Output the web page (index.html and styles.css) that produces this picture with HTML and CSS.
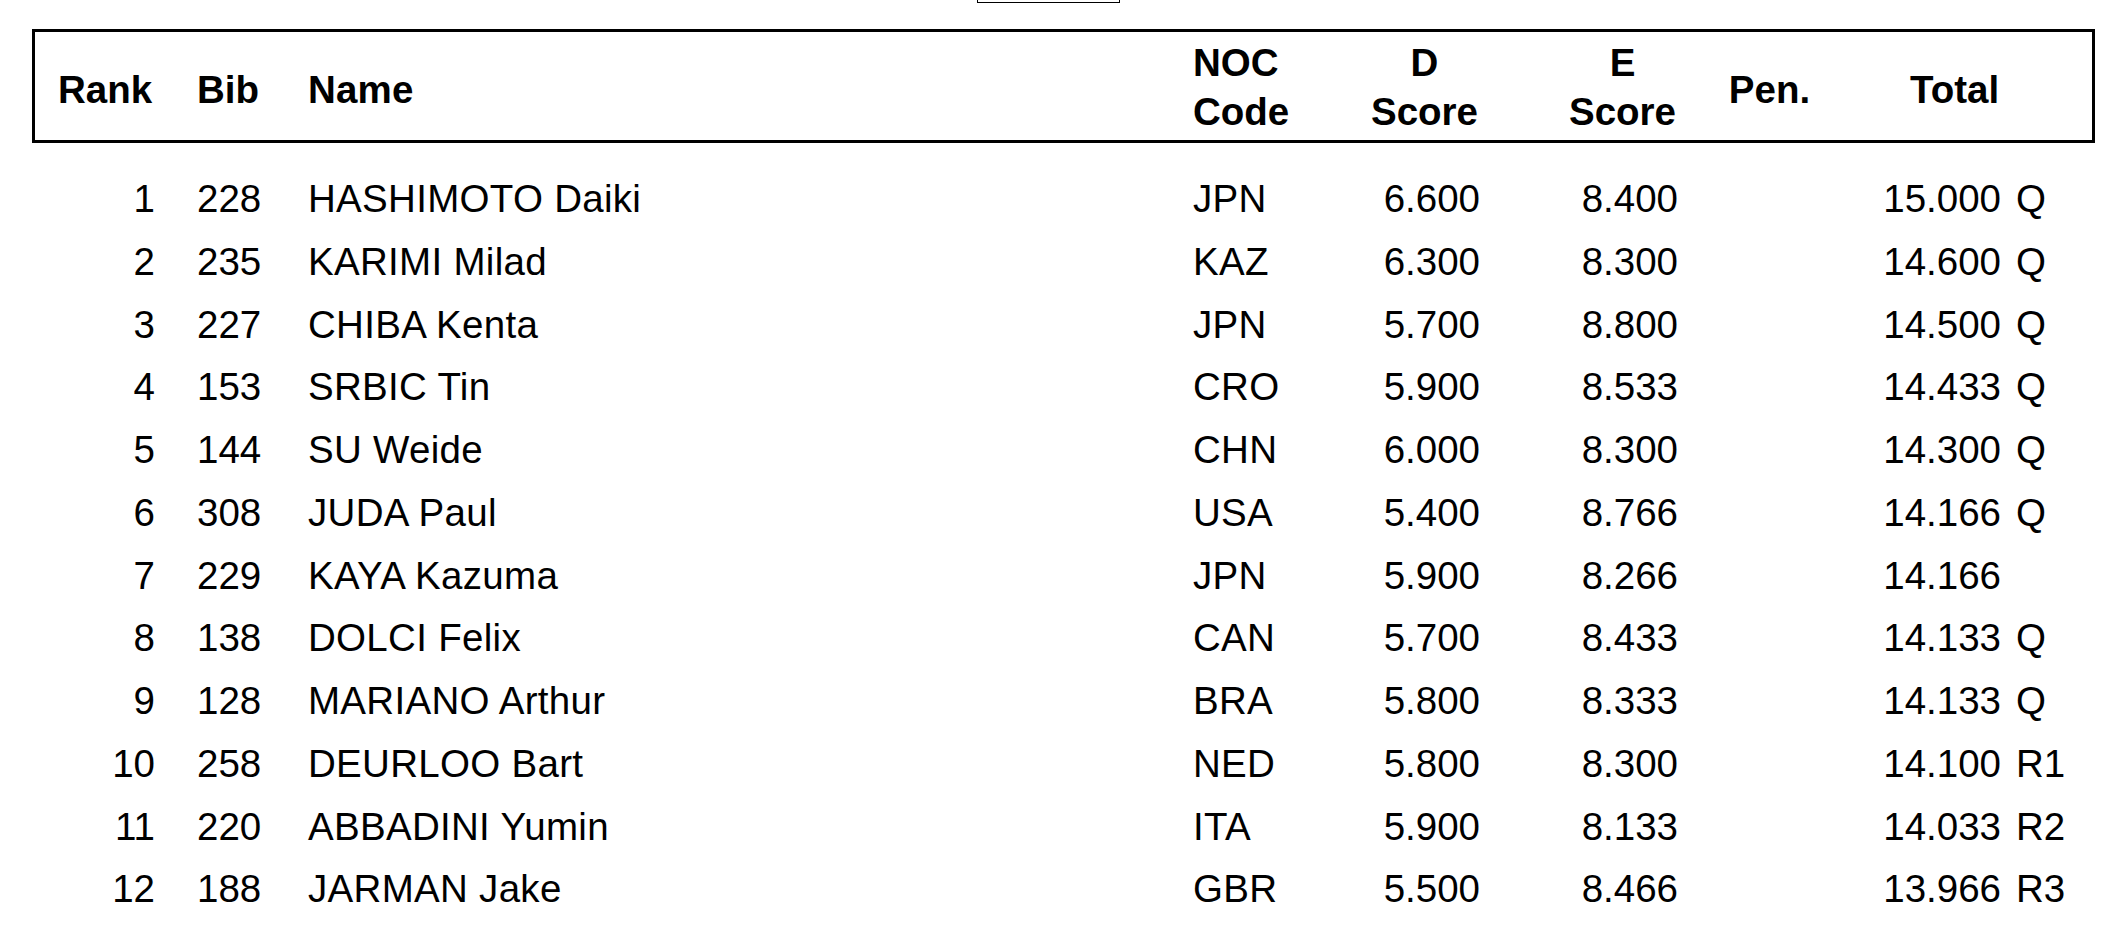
FILE: index.html
```html
<!DOCTYPE html>
<html>
<head>
<meta charset="utf-8">
<title>Results</title>
<link rel="stylesheet" href="styles.css">
</head>
<body>
<div class="topbox"></div>
<div class="head">
  <div class="h-rank single">Rank</div>
  <div class="h-bib single">Bib</div>
  <div class="h-name single">Name</div>
  <div class="h-noc">NOC<br>Code</div>
  <div class="h-score h-d"><span class="stack">D<br>Score</span></div>
  <div class="h-score h-e"><span class="stack">E<br>Score</span></div>
  <div class="h-pen single">Pen.</div>
  <div class="h-total single">Total</div>
</div>
<div class="rows">
  <div class="row"><span class="rank">1</span><span class="bib">228</span><span class="name">HASHIMOTO Daiki</span><span class="noc">JPN</span><span class="d">6.600</span><span class="e">8.400</span><span class="pen"></span><span class="total">15.000</span><span class="flag">Q</span></div>
  <div class="row"><span class="rank">2</span><span class="bib">235</span><span class="name">KARIMI Milad</span><span class="noc">KAZ</span><span class="d">6.300</span><span class="e">8.300</span><span class="pen"></span><span class="total">14.600</span><span class="flag">Q</span></div>
  <div class="row"><span class="rank">3</span><span class="bib">227</span><span class="name">CHIBA Kenta</span><span class="noc">JPN</span><span class="d">5.700</span><span class="e">8.800</span><span class="pen"></span><span class="total">14.500</span><span class="flag">Q</span></div>
  <div class="row"><span class="rank">4</span><span class="bib">153</span><span class="name">SRBIC Tin</span><span class="noc">CRO</span><span class="d">5.900</span><span class="e">8.533</span><span class="pen"></span><span class="total">14.433</span><span class="flag">Q</span></div>
  <div class="row"><span class="rank">5</span><span class="bib">144</span><span class="name">SU Weide</span><span class="noc">CHN</span><span class="d">6.000</span><span class="e">8.300</span><span class="pen"></span><span class="total">14.300</span><span class="flag">Q</span></div>
  <div class="row"><span class="rank">6</span><span class="bib">308</span><span class="name">JUDA Paul</span><span class="noc">USA</span><span class="d">5.400</span><span class="e">8.766</span><span class="pen"></span><span class="total">14.166</span><span class="flag">Q</span></div>
  <div class="row"><span class="rank">7</span><span class="bib">229</span><span class="name">KAYA Kazuma</span><span class="noc">JPN</span><span class="d">5.900</span><span class="e">8.266</span><span class="pen"></span><span class="total">14.166</span><span class="flag"></span></div>
  <div class="row"><span class="rank">8</span><span class="bib">138</span><span class="name">DOLCI Felix</span><span class="noc">CAN</span><span class="d">5.700</span><span class="e">8.433</span><span class="pen"></span><span class="total">14.133</span><span class="flag">Q</span></div>
  <div class="row"><span class="rank">9</span><span class="bib">128</span><span class="name">MARIANO Arthur</span><span class="noc">BRA</span><span class="d">5.800</span><span class="e">8.333</span><span class="pen"></span><span class="total">14.133</span><span class="flag">Q</span></div>
  <div class="row"><span class="rank">10</span><span class="bib">258</span><span class="name">DEURLOO Bart</span><span class="noc">NED</span><span class="d">5.800</span><span class="e">8.300</span><span class="pen"></span><span class="total">14.100</span><span class="flag">R1</span></div>
  <div class="row"><span class="rank">11</span><span class="bib">220</span><span class="name">ABBADINI Yumin</span><span class="noc">ITA</span><span class="d">5.900</span><span class="e">8.133</span><span class="pen"></span><span class="total">14.033</span><span class="flag">R2</span></div>
  <div class="row"><span class="rank">12</span><span class="bib">188</span><span class="name">JARMAN Jake</span><span class="noc">GBR</span><span class="d">5.500</span><span class="e">8.466</span><span class="pen"></span><span class="total">13.966</span><span class="flag">R3</span></div>
</div>
</body>
</html>
```

FILE: styles.css
```css
html, body {
  margin: 0;
  padding: 0;
  background: #ffffff;
}

body {
  font-family: "Liberation Sans", Arial, sans-serif;
  font-size: 38.5px;
  color: #000000;
  width: 2122px;
  overflow: hidden;
}

.topbox {
  margin-left: 977px;
  width: 141px;
  height: 2px;
  border: 1px solid #000000;
  border-top: none;
}

.head {
  margin-top: 26px;
  margin-left: 32px;
  width: 2057px;
  height: 106px;
  padding-top: 2px;
  border: 3px solid #000000;
  display: grid;
  grid-template-columns: 120px 153px 885px 177px 110px 199px 181px 141px 1fr;
  align-items: center;
  font-weight: bold;
  line-height: 49px;
}

.single {
  padding-top: 5px;
}

.h-rank {
  padding-left: 23px;
}

.h-bib {
  padding-left: 42px;
}

.h-name {
  letter-spacing: 0.2px;
}

.h-score {
  text-align: right;
}

.h-d {
  padding-right: 2px;
}

.h-e {
  padding-right: 3px;
}

.stack {
  display: inline-block;
  text-align: center;
}

.h-pen {
  text-align: center;
}

.h-total {
  grid-column: 8 / span 2;
  padding-left: 50px;
}

.rows {
  margin-top: 25px;
  margin-left: 35px;
  width: 2057px;
}

.row {
  display: grid;
  grid-template-columns: 120px 153px 885px 177px 110px 199px 181px 141px 1fr;
  line-height: 62.75px;
  white-space: nowrap;
}

.rank {
  text-align: right;
}

.bib {
  padding-left: 42px;
}

.name,
.noc {
  letter-spacing: 0.3px;
}

.d,
.e,
.total {
  text-align: right;
}

.e {
  padding-right: 1px;
}

.flag {
  padding-left: 15px;
}
```
